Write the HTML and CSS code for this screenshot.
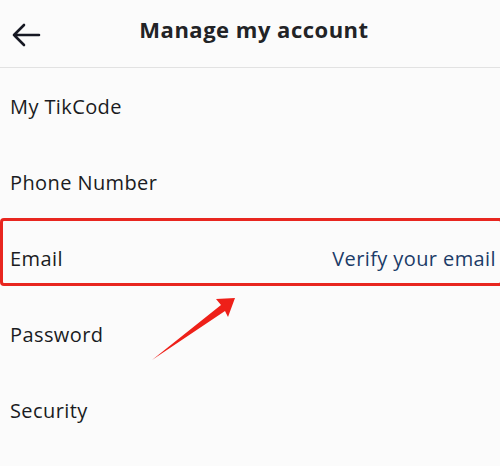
FILE: index.html
```html
<!DOCTYPE html>
<html>
<head>
    <title>Manage my account</title>
    <link rel="stylesheet" href="styles.css">
</head>
<body>
    <div class="page">
        <header class="top-bar">
            <svg class="back" width="30" height="24" viewBox="0 0 30 24">
                <path d="M28 12H3M13 2L3 12l10 10" fill="none" stroke="#161823" stroke-width="2.6" stroke-linecap="round" stroke-linejoin="round"/>
            </svg>
            <h1 class="title">Manage my account</h1>
        </header>

        <ul class="menu">
            <li class="menu-item">My TikCode</li>
            <li class="menu-item">Phone Number</li>
            <li class="menu-item">
                <span>Email</span>
                <span class="hint">Verify your email</span>
            </li>
            <li class="menu-item">Password</li>
            <li class="menu-item">Security</li>
        </ul>

        <!-- annotation drawn over the screenshot -->
        <div class="mark-box"></div>
        <svg class="mark-arrow" width="500" height="466" viewBox="0 0 500 466">
            <polygon points="235,298 216,299 221,305 152,360 225,311 228,317" fill="#ee2019"/>
        </svg>
    </div>
</body>
</html>
```

FILE: styles.css
```css
body {
    margin: 0;
    background: #fbfbfb;
    font-family: "Open Sans", "Liberation Sans", sans-serif;
    color: #1a1b22;
    overflow: hidden;
}
.page {
    position: relative;
    width: 500px;
    height: 466px;
}
.top-bar {
    height: 67px;
    display: flex;
    align-items: center;
    border-bottom: 1px solid #e2e2e2;
    position: relative;
}
.back {
    margin-left: 11px;
    margin-top: 2px;
}
.title {
    position: absolute;
    left: 0;
    right: 0;
    top: 14px;
    margin: 0;
    text-align: center;
    font-size: 22px;
    font-weight: 700;
    letter-spacing: 0.5px;
    padding-left: 8px;
    color: #222326;
}
.menu {
    list-style: none;
    margin: 0;
    padding: 0;
}
.menu-item {
    height: 76px;
    display: flex;
    align-items: center;
    justify-content: space-between;
    padding: 0 4px 0 10px;
    box-sizing: border-box;
    font-size: 20px;
    letter-spacing: 0.4px;
}
.hint {
    color: #1c3b68;
}
.mark-box {
    position: absolute;
    left: 0;
    top: 218px;
    width: 497px;
    height: 62px;
    border: 3px solid #e8261f;
    border-radius: 4px;
}
.mark-arrow {
    position: absolute;
    left: 0;
    top: 0;
}
```
